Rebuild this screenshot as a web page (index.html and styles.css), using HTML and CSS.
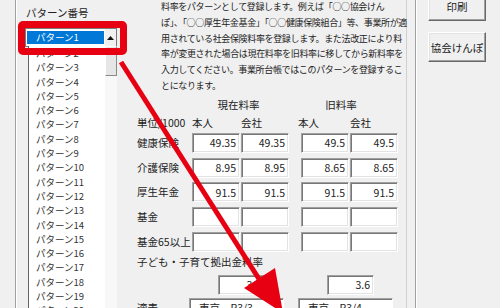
FILE: index.html
```html
<!DOCTYPE html>
<html lang="ja">
<head>
    <meta charset="UTF-8">
    <meta name="viewport" content="width=device-width, initial-scale=1.0">
    <title>料率パターン登録</title>
    <link rel="stylesheet" href="styles.css">
</head>
<body>
    <div class="window">
        <!-- パターン選択 -->
        <aside class="pattern-pane">
            <div class="pattern-group">
                <div class="group-title">パターン番号</div>
                <div class="combo">
                    <span class="combo-value">パターン1</span>
                    <span class="combo-btn">
                        <svg width="7" height="4" viewBox="0 0 7 4"><path d="M0 4 L3.5 0 L7 4 Z" fill="#111"/></svg>
                    </span>
                </div>
                <div class="dropdown">
                    <ul class="pattern-list">
                        <li>パターン2</li>
                        <li>パターン3</li>
                        <li>パターン4</li>
                        <li>パターン5</li>
                        <li>パターン6</li>
                        <li>パターン7</li>
                        <li>パターン8</li>
                        <li>パターン9</li>
                        <li>パターン10</li>
                        <li>パターン11</li>
                        <li>パターン12</li>
                        <li>パターン13</li>
                        <li>パターン14</li>
                        <li>パターン15</li>
                        <li>パターン16</li>
                        <li>パターン17</li>
                        <li>パターン18</li>
                        <li>パターン19</li>
                        <li>パターン20</li>
                    </ul>
                    <div class="scrollbar"><div class="thumb"></div></div>
                </div>
            </div>
        </aside>

        <!-- 料率入力 -->
        <main class="rate-pane">
            <p class="note">
                料率をパターンとして登録します。例えば「○○協会けん<br>
                ぽ」、「○○厚生年金基金」「○○健康保険組合」等、事業所が適<br>
                用されている社会保険料率を登録します。また法改正により料<br>
                率が変更された場合は現在料率を旧料率に移してから新料率を<br>
                入力してください。事業所台帳ではこのパターンを登録するこ<br>
                とになります。
            </p>

            <div class="rate-grid">
                <div class="col-head now">現在料率</div>
                <div class="col-head old">旧料率</div>

                <div class="sub">単位/1000</div>
                <div class="sub">本人</div>
                <div class="sub">会社</div>
                <div class="sub old-start">本人</div>
                <div class="sub">会社</div>

                <div class="row-label">健康保険</div>
                <input class="rate" value="49.35">
                <input class="rate" value="49.35">
                <input class="rate old-start" value="49.5">
                <input class="rate" value="49.5">

                <div class="row-label">介護保険</div>
                <input class="rate" value="8.95">
                <input class="rate" value="8.95">
                <input class="rate old-start" value="8.65">
                <input class="rate" value="8.65">

                <div class="row-label">厚生年金</div>
                <input class="rate" value="91.5">
                <input class="rate" value="91.5">
                <input class="rate old-start" value="91.5">
                <input class="rate" value="91.5">

                <div class="row-label">基金</div>
                <input class="rate" value="">
                <input class="rate" value="">
                <input class="rate old-start" value="">
                <input class="rate" value="">

                <div class="row-label">基金65以上</div>
                <input class="rate" value="">
                <input class="rate" value="">
                <input class="rate old-start" value="">
                <input class="rate" value="">

                <div class="kids-label">子ども・子育て拠出金料率</div>
                <input class="rate kids now" value="3.6">
                <input class="rate kids old" value="3.6">

                <div class="row-label">適表</div>
                <div class="table-field now">東京　R3/3</div>
                <div class="table-field old">東京　R3/4</div>
            </div>
        </main>

        <!-- ボタン -->
        <aside class="button-pane">
            <button class="btn print">印刷</button>
            <button class="btn">協会けんぽ</button>
        </aside>
    </div>

    <!-- 注釈 -->
    <div class="highlight"></div>
    <svg class="arrow" viewBox="0 0 500 308">
        <line x1="121" y1="62" x2="259" y2="279" stroke="#e60012" stroke-width="5"/>
        <polygon points="244,288 275,268 283,313" fill="#e60012"/>
    </svg>
</body>
</html>
```

FILE: styles.css
```css
/* General Reset */
* {
    margin: 0;
    padding: 0;
    box-sizing: border-box;
}

body {
    width: 500px;
    height: 308px;
    overflow: hidden;
    background: #f0f0f0;
    color: #222;
    font-family: "Noto Sans CJK JP", sans-serif;
}

.window {
    display: flex;
    height: 308px;
}

/* Pattern list */
.pattern-pane {
    width: 128px;
    flex-shrink: 0;
    padding-left: 15px;
}

.pattern-group {
    height: 100%;
    padding: 6px 0 0 9px;
    border-left: 1px solid #a0a0a0;
    box-shadow: inset 1px 0 #fff;
}

.group-title {
    padding-left: 1px;
    font-size: 10.5px;
    line-height: 14px;
}

.combo {
    display: flex;
    width: 92px;
    height: 19px;
    margin-top: 8px;
    border: 1px solid #7a7a7a;
    background: #fff;
}

.combo-value {
    width: 77px;
    height: 13px;
    margin: 2px 0 2px 1px;
    padding-left: 9px;
    background: #0078d7;
    color: #fff;
    font-size: 9.5px;
    line-height: 13px;
}

.combo-btn {
    display: flex;
    align-items: center;
    justify-content: center;
    width: 11px;
    height: 17px;
    margin-left: auto;
    background: #f0f0f0;
}

.dropdown {
    display: flex;
    width: 89px;
    height: 270px;
    margin: -1px 0 0 3px;
    border-left: 1px solid #646464;
    background: #fff;
}

.pattern-list {
    flex: 1;
    list-style: none;
    padding-left: 7px;
    color: #333;
    font-size: 9.5px;
    line-height: 14.3px;
}

.scrollbar {
    width: 12px;
    background: #f8f8f8;
}

.thumb {
    height: 30px;
    background: #e6e6e6;
    border: 1px solid;
    border-color: #fff #8a8a8a #8a8a8a #fff;
}

/* Rate form */
.rate-pane {
    width: 279px;
    flex-shrink: 0;
    padding-left: 9px;
    border-right: 1px solid #d0d0d0;
}

.note {
    margin: -1px 0 0 24px;
    font-size: 9px;
    letter-spacing: -0.35px;
    line-height: 15.8px;
    white-space: nowrap;
}

.rate-grid {
    display: grid;
    grid-template-columns: 54px 48px 48px 10px 48px 48px;
    grid-template-rows: 14px 21px repeat(4, 24.75px) 22.5px 20.5px 23px 20px;
    column-gap: 1px;
    margin-top: 4px;
    font-size: 10.5px;
}

.col-head {
    text-align: center;
    line-height: 14px;
}

.col-head.now {
    padding-right: 4px;
}

.col-head.old {
    padding-right: 17px;
}

.sub {
    line-height: 21px;
    white-space: nowrap;
}

.sub.old-start {
    margin-left: -3px;
}

.old-start {
    grid-column-start: 5;
}

.row-label {
    grid-column-start: 1;
    line-height: 20px;
    white-space: nowrap;
}

.rate {
    width: 48px;
    height: 20px;
    padding-right: 3px;
    border: 1px solid;
    border-color: #a0a0a0 #fff #fff #a0a0a0;
    box-shadow: inset 1px 1px #777, inset -1px -1px #e3e3e3;
    background: #fff;
    color: #222;
    font: inherit;
    text-align: right;
    outline: none;
}

.kids-label {
    grid-column: 1 / -1;
    line-height: 16px;
}

.rate.kids {
    width: 47px;
    margin-left: 26px;
}

.now {
    grid-column: 2 / 4;
}

.old {
    grid-column: 5 / 7;
}

.table-field {
    width: 95px;
    height: 20px;
    margin-left: -3px;
    padding-left: 9px;
    border: 1px solid;
    border-color: #a0a0a0 #fff #fff #a0a0a0;
    box-shadow: inset 1px 1px #777;
    background: #fff;
    line-height: 18px;
}

/* Buttons */
.button-pane {
    flex: 1;
    display: flex;
    flex-direction: column;
    align-items: flex-start;
    margin-left: 8px;
    padding-left: 12px;
    border-left: 1px solid #a0a0a0;
    box-shadow: inset 1px 0 #fff;
}

.btn {
    width: 58px;
    height: 30px;
    margin-top: 11px;
    border: 1px solid;
    border-color: #fff #696969 #696969 #fff;
    box-shadow: inset -1px -1px #a0a0a0, inset 1px 1px #e3e3e3;
    background: #f0f0f0;
    color: #222;
    font-family: inherit;
    font-size: 10.5px;
}

.btn.print {
    height: 29px;
    margin-top: -8px;
}

/* Annotation overlay */
.highlight {
    position: absolute;
    left: 18px;
    top: 21px;
    width: 109px;
    height: 34px;
    border: 7px solid #e60012;
    border-radius: 5px;
}

.arrow {
    position: absolute;
    left: 0;
    top: 0;
    width: 500px;
    height: 308px;
    pointer-events: none;
}
```
